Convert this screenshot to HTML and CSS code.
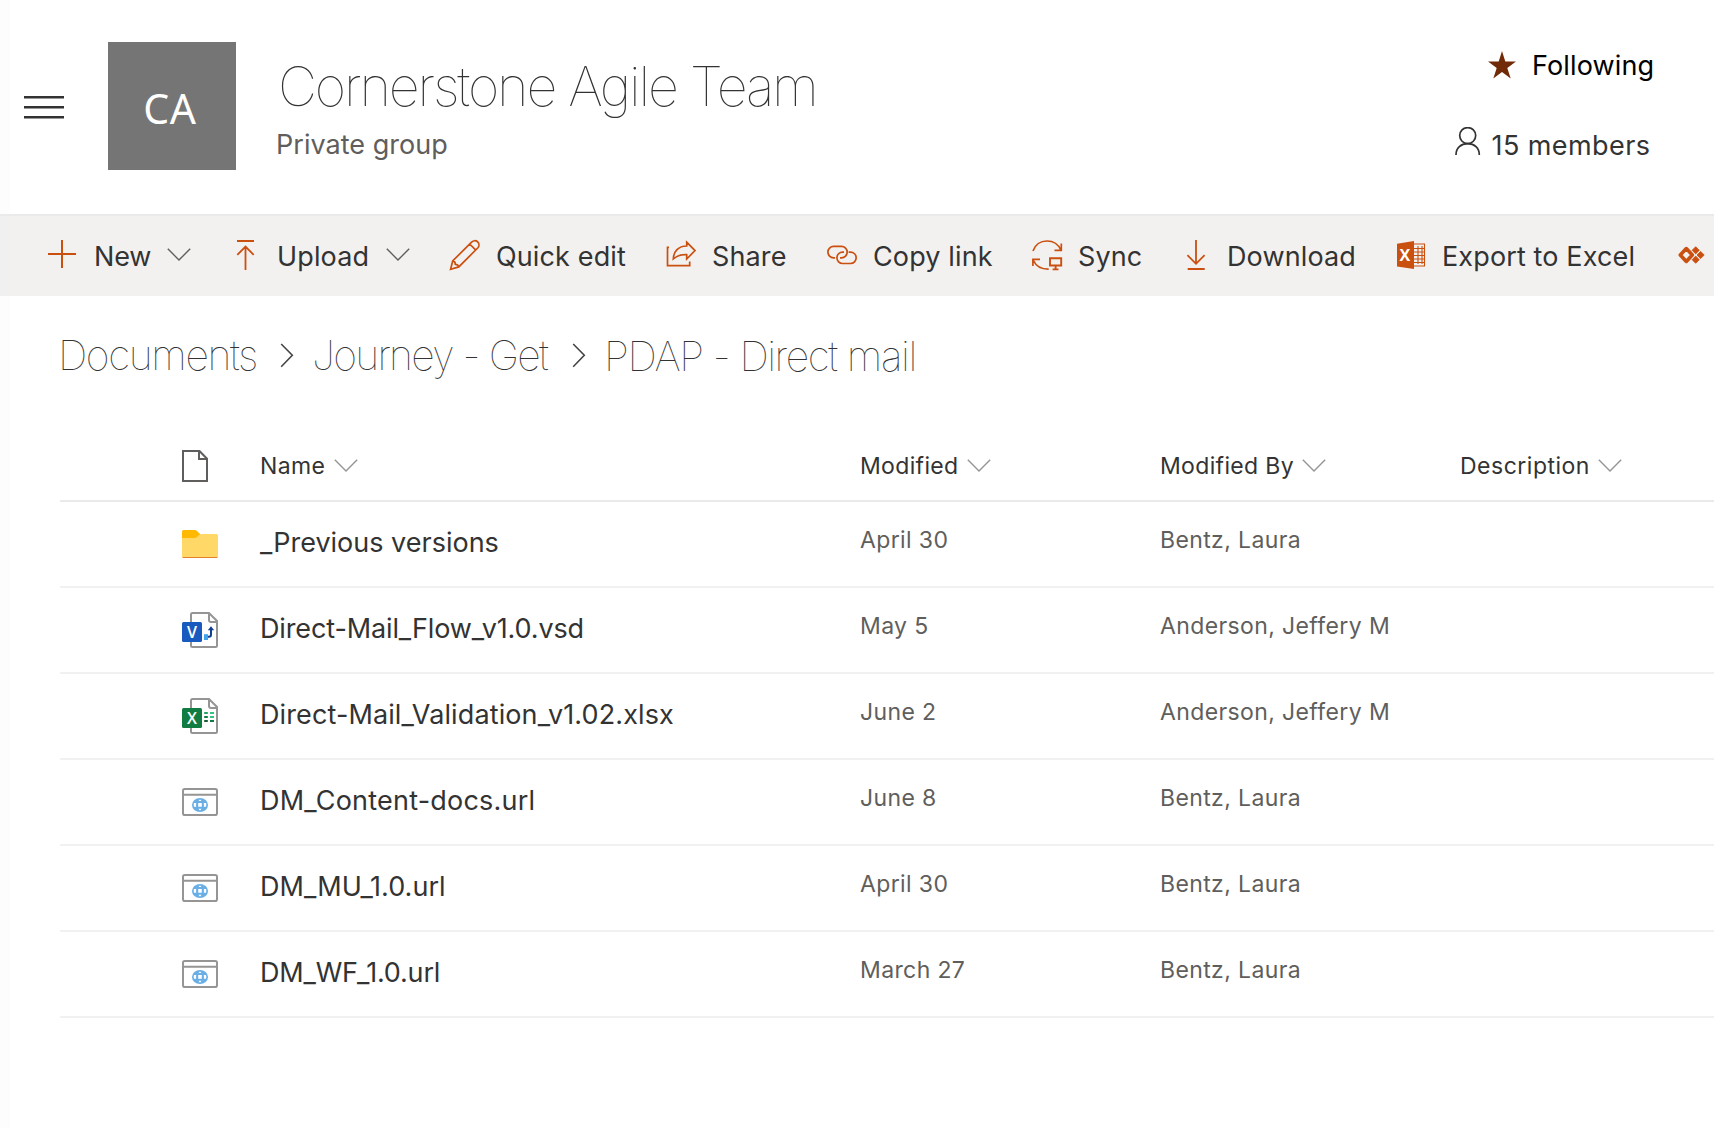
FILE: index.html
```html
<!DOCTYPE html>
<html lang="en">
<head>
<meta charset="utf-8">
<title>Cornerstone Agile Team</title>
<link rel="stylesheet" href="styles.css">
</head>
<body>
<svg class="defs" width="0" height="0" aria-hidden="true">
  <symbol id="chevron-down" viewBox="0 0 24 14"><path d="M.8 .8 12 12 23.2 .8" fill="none" stroke="currentColor" stroke-width="1.4"/></symbol>
  <symbol id="chevron-right" viewBox="0 0 14 25"><path d="M1.2 1 12.3 12.3 1.2 23.8" fill="none" stroke="currentColor" stroke-width="1.6"/></symbol>
  <symbol id="file-url" viewBox="0 0 36 28">
    <rect x="1" y="1" width="34" height="26" rx="1.8" fill="#fff" stroke="#979593" stroke-width="2"/>
    <path d="M1 6.8H35" stroke="#979593" stroke-width="2"/>
    <ellipse cx="18" cy="17" rx="8" ry="7.1" fill="#69afe5"/>
    <path d="M16.2 15h3.6v3.8h-3.6zM12 15h2.2q-.3 1.9 0 3.8H12q-.7-1.9 0-3.8zM24 15h-2.2q.3 1.9 0 3.8H24q.7-1.9 0-3.8zM16.6 13.1q.6-1.5 1.4-1.6 .8.1 1.4 1.6zM16.6 20.8q.6 1.5 1.4 1.6 .8-.1 1.4-1.6z" fill="#fff"/>
  </symbol>
</svg>

<header class="site-header">
  <svg class="menu" viewBox="0 0 40 24"><path d="M0 1.2H40M0 11.2H40M0 21.2H40" stroke="#333" stroke-width="2.4"/></svg>
  <div class="avatar">CA</div>
  <div class="identity">
    <h1 class="title">Cornerstone Agile Team</h1>
    <div class="subtitle">Private group</div>
  </div>
  <div class="status">
    <div class="follow">
      <svg width="28" height="28" viewBox="0 0 28 28"><path d="M14 0 17.3 10.4H28L19.3 16.9 22.7 27.5 14 21 5.3 27.5 8.7 16.9 0 10.4H10.7Z" fill="#712b09"/></svg>
      <span>Following</span>
    </div>
    <div class="members">
      <svg width="26" height="28" viewBox="0 0 26 28"><g fill="none" stroke="#333" stroke-width="1.7"><circle cx="12.7" cy="8.6" r="8"/><path d="M1 28C1 21 6 16.7 12.7 16.7S24.3 21 24.3 28"/></g></svg>
      <span>15 members</span>
    </div>
  </div>
</header>

<nav class="commands">
  <div class="command new">
    <svg class="icon" viewBox="0 0 32 32"><path d="M2 15H30M16 1V29"/></svg>
    <span>New</span><svg class="chevron"><use href="#chevron-down"/></svg>
  </div>
  <div class="command upload">
    <svg class="icon" viewBox="0 0 32 32"><path d="M7 2H24"/><path d="M15.5 31V7.5M7.3 15.8 15.5 7.6 23.7 15.8" stroke-width="1.8"/></svg>
    <span>Upload</span><svg class="chevron"><use href="#chevron-down"/></svg>
  </div>
  <div class="command">
    <svg class="icon" viewBox="0 0 32 32"><path d="M1.6 30.3 3.7 22 22.6 3.1C24.4 1.4 27 1.2 28.7 2.9S30.400 7.200 28.700 9L9.800 27.900ZM20.700 5 26.800 11.100M3.700 22.200Q6.300 22.300 6.300 25.300 9.500 25.500 9.600 28" stroke-width="1.7"/></svg>
    <span>Quick edit</span>
  </div>
  <div class="command">
    <svg class="icon" viewBox="0 0 32 32"><path d="M4 8.400H2.500V26.700H24.700V22.500" stroke-width="1.7"/><path d="M21.700 3.200 30 11.600 21.700 20V15.700C15.500 15.400 11.500 17 8.300 19.900 8.500 12.500 13.500 7 21.700 7Z" stroke-width="1.7"/></svg>
    <span>Share</span>
  </div>
  <div class="command">
    <svg class="icon" viewBox="0 0 32 32"><path d="M9 18.800H7.600A5.700 5.700 0 0 1 7.600 7.400H15.500A5.700 5.700 0 0 1 15.500 18.800H14M22.600 13.100H24.500A5.700 5.700 0 0 1 24.500 24.500H16.600A5.700 5.700 0 0 1 16.600 13.100H18" stroke-width="1.700"/></svg>
    <span>Copy link</span>
  </div>
  <div class="command">
    <svg class="icon" viewBox="0 0 32 32"><path d="M2 12C4.300 5.500 9.500 2 16 2S27.300 5.300 29.800 11M30.300 4.500V11.400H23.500M1.900 27V20.400H9M2.400 21.500C5 27 10.500 30.300 17.700 30.200" stroke-width="1.700"/><path d="M19 19.200H30.200V26.500H19ZM24.600 26.500V30.300M21.600 30.400H27.500" stroke-width="1.900"/></svg>
    <span>Sync</span>
  </div>
  <div class="command">
    <svg class="icon" viewBox="0 0 32 32"><path d="M16 1V25M7.400 16.200 16 24.800 24.600 16.200M7.700 30H24.700" stroke-width="1.800"/></svg>
    <span>Download</span>
  </div>
  <div class="command">
    <svg class="icon" viewBox="0 0 32 32"><path d="M19 5H29.500V27H19M19 9.500H29.500M19 13H29.500M19 16.500H29.500M19 20H29.500M19 23.500H29.500M23 7V25M27 7V25" stroke-width="1.100"/><path d="M2 4.700 19 2V30L2 27.500Z" fill="#ca5010" stroke="none"/><text x="10" y="22" class="glyph export-x">X</text></svg>
    <span>Export to Excel</span>
  </div>
  <div class="command">
    <svg class="icon" viewBox="0 0 32 32"><path d="M11.300 9.600 17.300 16 11.300 22.400 5.300 16Z" stroke-width="3.600" stroke-linejoin="round"/><path d="M20.700 7.700 24.300 11.300 20.700 14.900 17.100 11.300ZM25.600 12.400 29.200 16 25.600 19.600 22 16ZM20.700 17.100 24.300 20.700 20.700 24.300 17.100 20.700Z" fill="#ca5010" stroke="#ca5010" stroke-width=".8" stroke-linejoin="round"/></svg>
  </div>
</nav>

<main>
  <nav class="breadcrumb">
    <span class="crumb documents">Documents</span>
    <svg class="separator"><use href="#chevron-right"/></svg>
    <span class="crumb journey">Journey - Get</span>
    <svg class="separator"><use href="#chevron-right"/></svg>
    <span class="crumb current">PDAP - Direct mail</span>
  </nav>

  <section class="list">
    <div class="head">
      <div class="type"><svg width="26" height="32" viewBox="0 0 26 32"><path d="M1 1H17.500L25 8.700V31H1ZM17 1V9H25" fill="none" stroke="#605e5c" stroke-width="2"/></svg></div>
      <div class="column">Name<svg class="chevron"><use href="#chevron-down"/></svg></div>
      <div class="column">Modified<svg class="chevron"><use href="#chevron-down"/></svg></div>
      <div class="column">Modified By<svg class="chevron"><use href="#chevron-down"/></svg></div>
      <div class="column description">Description<svg class="chevron"><use href="#chevron-down"/></svg></div>
    </div>
    <div class="row">
      <div class="type"><svg width="36" height="28" viewBox="0 0 36 28"><path d="M0 1.500Q0 0 1.500 0H12.500Q14 0 15 1L18 4V9H0Z" fill="#ffb900"/><path d="M0 8H12.500Q14 8 15.300 6.700L17 5Q18 4 19.500 4H34.500Q36 4 36 5.500V26.500Q36 28 34.500 28H1.500Q0 28 0 26.500Z" fill="#ffd868"/><path d="M.7 27.500H35.300" stroke="#e3812d"/></svg></div>
      <div class="name">_Previous versions</div><div class="meta">April 30</div><div class="meta">Bentz, Laura</div>
    </div>
    <div class="row">
      <div class="type"><svg width="36" height="36" viewBox="0 0 36 36"><path d="M9 10V2.500Q9 1 10.500 1H27L35 9V33.500Q35 35 33.500 35H10.500Q9 35 9 33.500V30M27 1V8Q27 10 29 10H35" fill="none" stroke="#979593" stroke-width="2"/><rect y="10" width="20" height="20" rx="1.500" fill="#185abd"/><text x="10" y="25.600" class="glyph">V</text><rect x="22" y="22.200" width="4" height="5.800" fill="#41a5ee"/><path d="M26 24.800H27Q29 24.800 29 22.500V16" fill="none" stroke="#103f91" stroke-width="2"/><path d="M25.800 18.200 29 14.200 32.200 18.200Z" fill="#103f91"/></svg></div>
      <div class="name">Direct-Mail_Flow_v1.0.vsd</div><div class="meta">May 5</div><div class="meta">Anderson, Jeffery M</div>
    </div>
    <div class="row">
      <div class="type"><svg width="36" height="36" viewBox="0 0 36 36"><path d="M9 10V2.500Q9 1 10.500 1H27L35 9V33.500Q35 35 33.500 35H10.500Q9 35 9 33.500V30M27 1V8Q27 10 29 10H35" fill="none" stroke="#979593" stroke-width="2"/><rect y="10" width="20" height="20" rx="1.500" fill="#107c41"/><text x="10" y="25.600" class="glyph">X</text><path d="M22.200 15H25.800" stroke="#21a366" stroke-width="2"/><path d="M28 15H32M28 19H32" stroke="#33c481" stroke-width="2"/><path d="M22.200 19H25.800M28 23H32" stroke="#107c41" stroke-width="2"/><path d="M22.200 23H25.800" stroke="#185c37" stroke-width="2"/></svg></div>
      <div class="name">Direct-Mail_Validation_v1.02.xlsx</div><div class="meta">June 2</div><div class="meta">Anderson, Jeffery M</div>
    </div>
    <div class="row">
      <div class="type"><svg width="36" height="28"><use href="#file-url"/></svg></div>
      <div class="name">DM_Content-docs.url</div><div class="meta">June 8</div><div class="meta">Bentz, Laura</div>
    </div>
    <div class="row">
      <div class="type"><svg width="36" height="28"><use href="#file-url"/></svg></div>
      <div class="name">DM_MU_1.0.url</div><div class="meta">April 30</div><div class="meta">Bentz, Laura</div>
    </div>
    <div class="row">
      <div class="type"><svg width="36" height="28"><use href="#file-url"/></svg></div>
      <div class="name">DM_WF_1.0.url</div><div class="meta">March 27</div><div class="meta">Bentz, Laura</div>
    </div>
  </section>
</main>
</body>
</html>
```
FILE: styles.css
```css
* { box-sizing: border-box; }

body {
  margin: 0;
  min-height: 1128px;
  overflow: hidden;
  background: linear-gradient(to right, #fdfdfd 10px, #fff 10px);
  color: #333;
  font: 400 27px/40px Inter, "Noto Sans", sans-serif;
}

svg { display: block; flex: none; }
.defs { display: none; }

/* Site header */
.site-header {
  display: flex;
  align-items: flex-start;
  height: 214px;
  padding-left: 24px;
}
.menu { width: 40px; height: 24px; margin-top: 96px; }
.avatar {
  width: 128px;
  height: 128px;
  margin: 42px 0 0 44px;
  padding-right: 4px;
  background: #757575;
  color: #fff;
  font: 400 41px/132px "Noto Sans", sans-serif;
  letter-spacing: .6px;
  text-align: center;
}
.identity { margin: 55px 0 0 40px; }
.title {
  margin: 0 0 0 2px;
  font-size: 54px;
  font-weight: 100;
  line-height: 64px;
  letter-spacing: -2.16px;
}
.subtitle { margin-top: 6px; color: #605e5c; letter-spacing: .03px; }
.status { width: 259px; margin: 46px 0 0 auto; }
.follow, .members { display: flex; align-items: center; }
.follow { gap: 16px; padding-left: 33px; color: #000; letter-spacing: .13px; }
.follow svg { margin-top: -2px; }
.members { gap: 10.500px; margin-top: 40px; letter-spacing: .42px; }
.members svg { margin-top: -10px; }

/* Command bar */
.commands {
  display: grid;
  grid-template-columns: 184px 219px 216px 161px 205px 149px 215px 280px 32px;
  align-items: center;
  height: 82px;
  padding-left: 46px;
  border-top: 2px solid #eaeaea;
  background: linear-gradient(to right, #f0f0f0 10px, #f3f1f0 10px);
  overflow: hidden;
}
.command { display: flex; align-items: center; gap: 15px; letter-spacing: .13px; white-space: nowrap; }
.command span { margin-top: 2px; }
.command .chevron { margin-left: 2px; color: #605e5c; }
.new { gap: 16px; letter-spacing: -.15px; }
.new .chevron { margin-left: 0; }
.icon {
  width: 32px;
  height: 32px;
  margin-top: -2px;
  fill: none;
  stroke: #ca5010;
  stroke-width: 2;
}
.chevron { width: 24px; height: 14px; margin-top: -2px; }
.glyph {
  fill: #fff;
  stroke: none;
  font: 600 16px "Open Sans", sans-serif;
  text-anchor: middle;
}
.export-x { font-size: 16px; font-weight: 700; }

/* Breadcrumb */
.breadcrumb {
  display: flex;
  align-items: center;
  height: 134px;
  padding: 0 0 16px 58px;
  font-size: 41px;
  font-weight: 100;
  white-space: nowrap;
}
.separator { width: 14px; height: 25px; color: #444; }
.crumb { line-height: 50px; }
.documents { width: 222px; letter-spacing: -1.400px; }
.journey { width: 278px; padding-left: 18px; letter-spacing: -1.720px; }
.current { padding: 2px 0 0 18px; letter-spacing: -1.440px; }

/* Document list */
.list { margin-left: 60px; }
.head, .row {
  display: grid;
  grid-template-columns: 200px 600px 300px 300px 1fr;
  align-items: center;
}
.head { height: 72px; border-bottom: 2px solid #eaeaea; font-size: 23px; }
.head .type { margin-top: 2px; }
.row { height: 86px; border-bottom: 2px solid #f1f1f1; }
.type { padding-left: 122px; }
.column { display: flex; align-items: center; gap: 9px; margin-top: 2px; letter-spacing: .34px; }
.head .chevron { margin: 0 0 0 -.5px; color: #979593; }
.description { letter-spacing: .5px; }
.name { margin-top: -2px; }
.meta { margin-top: -9px; color: #605e5c; font-size: 23px; letter-spacing: .380px; }
.row:nth-child(3) .name { letter-spacing: -.13px; }
.row:nth-child(4) .name { letter-spacing: .115px; }
.row:nth-child(5) .name { letter-spacing: .210px; }
.row:nth-child(6) .name { letter-spacing: .060px; }
.row:nth-child(7) .name { letter-spacing: -.180px; }
```
